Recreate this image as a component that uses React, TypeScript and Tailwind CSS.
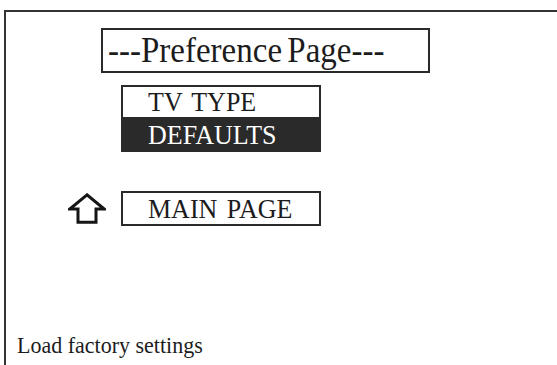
import React from 'react';

const serif = { fontFamily: '"Liberation Serif", "Times New Roman", serif' };

// Outline up arrow shown beside the MAIN PAGE entry
const UpArrow = () => (
  <svg width="38" height="31" viewBox="0 0 38 31" className="shrink-0">
    <path
      d="M19 1.8 L1.8 16 L10 16 L10 29.3 L28 29.3 L28 16 L36.2 16 Z"
      fill="#fff"
      stroke="#151515"
      strokeWidth="3"
      strokeLinejoin="miter"
    />
  </svg>
);

export default function App() {
  return (
    <div className="w-[557px] h-[365px] overflow-hidden bg-white text-[#1c1c1c]" style={serif}>
      <div className="ml-[4px] mt-[10px] w-[640px] h-[420px] border-t-2 border-l-2 border-[#333] flex flex-col">
        {/* title */}
        <div className="ml-[95px] mt-[16px] w-[329px] h-[45px] border-2 border-[#2a2a2a] pl-[5px] text-[33px] leading-[40px] [word-spacing:-3px] whitespace-nowrap">
          <span className="inline-block scale-y-[1.07]">---Preference Page---</span>
        </div>

        {/* menu */}
        <div className="ml-[115px] mt-[12px] w-[200px] flex flex-col">
          <div className="h-[32px] border-2 border-b-0 border-[#2a2a2a] pl-[25px] text-[26px] leading-[30px] [word-spacing:3px] whitespace-nowrap">
            <span className="inline-block scale-y-[1.07]">TV TYPE</span>
          </div>
          <div className="h-[35px] bg-[#2a2a2a] text-white pl-[27px] text-[26px] leading-[35px]">
            <span className="inline-block scale-y-[1.07]">DEFAULTS</span>
          </div>
        </div>

        {/* back to main page */}
        <div className="mt-[39px] ml-[62px] flex items-center gap-[15px]">
          <UpArrow />
          <div className="w-[200px] h-[35px] border-2 border-[#2a2a2a] pl-[25px] text-[26px] leading-[31px] [word-spacing:3px] whitespace-nowrap">
            <span className="inline-block scale-y-[1.07]">MAIN PAGE</span>
          </div>
        </div>

        {/* help line */}
        <div className="mt-[107px] ml-[11px] text-[22px] leading-[26px]">
          <span className="inline-block scale-y-[1.07]">Load factory settings</span>
        </div>
      </div>
    </div>
  );
}
